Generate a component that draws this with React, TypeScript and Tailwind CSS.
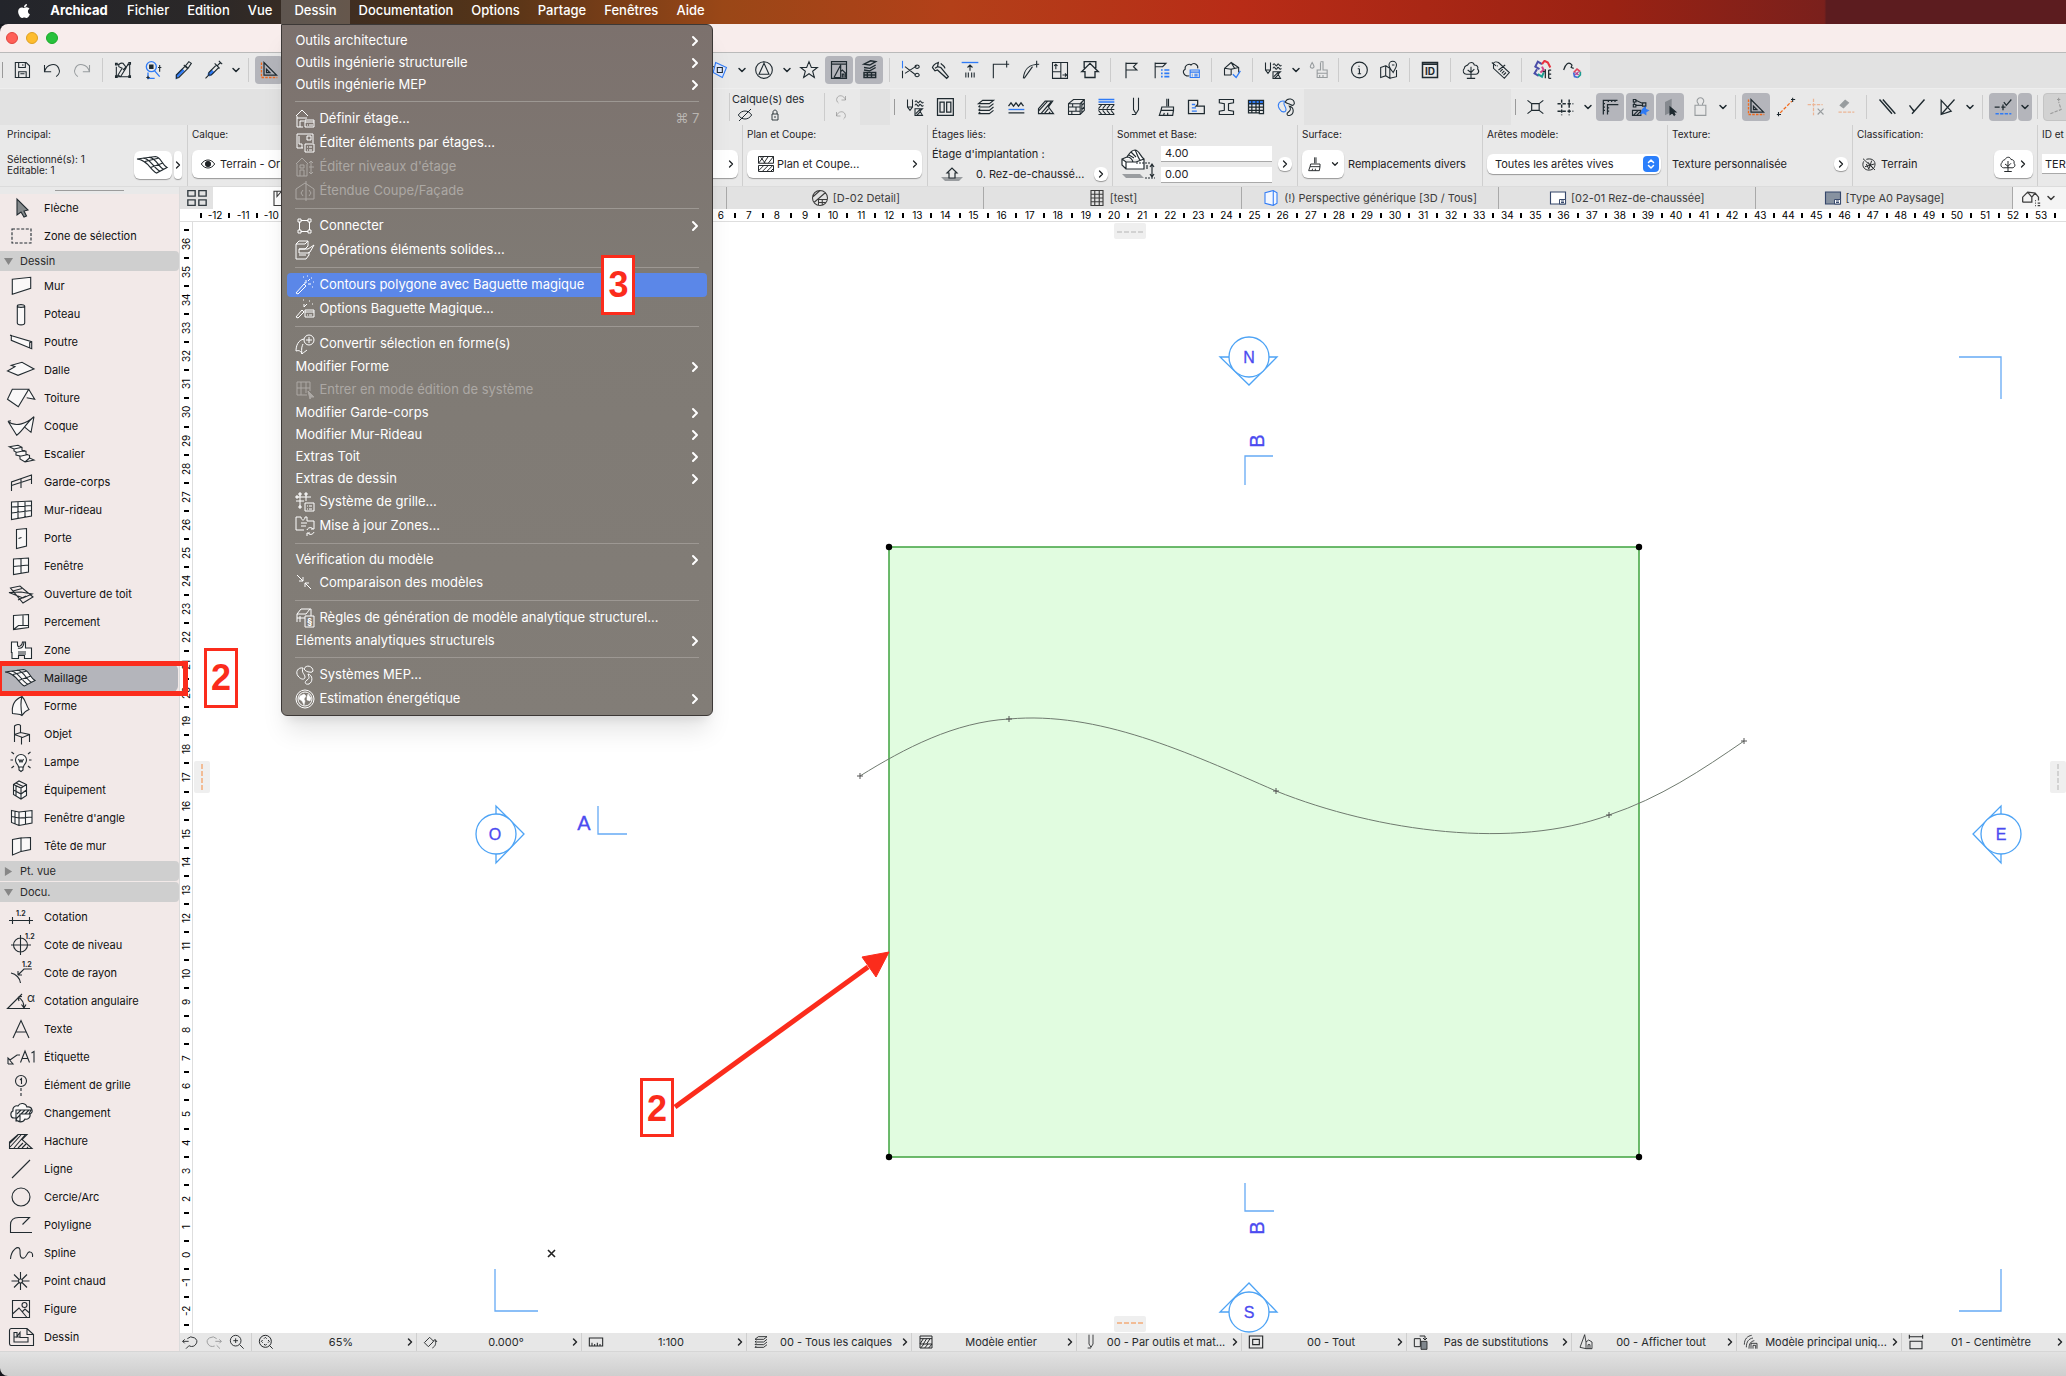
import type { ReactNode } from 'react';
import { ChevronDown, ChevronRight, ChevronsUpDown } from 'lucide-react';
import { FaApple } from 'react-icons/fa';

const BLUE = '#2f7bf6';
const ORANGE = '#f5893c';

// Icônes de la boîte à outils, dessinées sur une grille 28 x 24
const toolIcons: Record<string, ReactNode> = {
  Flèche: <path d="M10 3v16l4-3 3 5 2.500-1-2.500-5 4-1z" fill="#84898b" />,
  'Zone de sélection': <path d="M5 5h19v14H5z" fill="none" strokeDasharray="3 1.600" />,
  Mur: <path d="M5.300 5.300 23.700 3.300v11L5.300 20.300z" />,
  Poteau: <path d="M10.300 4v17c0 2.500 7.400 2.500 7.400 0V4c0-1.800-7.400-1.800-7.400 0s7.400 1.800 7.400 0" />,
  Poutre: <path d="M3 5.300l21.700 6.400v7L4.300 10.300V5.600M3 5.300l2 .2M24.700 11.700l-2 1v5" />,
  Dalle: <path d="M.5 13 8 8.700 4.300 7.300 15 4.300 27 11 11 17.300z" />,
  Toiture: <path d="M5.300 3.300h16.400L11.300 20.700.5 13.300zM21.700 3.300l6 10-8-1.500" />,
  Coque: <path d="M1 7.300C9 14 20 9 27 2.700c-7 5-10 13-17.300 18.600zM27 2.700 24 18.300l-6-5M1 7.300l3-.500" />,
  Escalier: <path d="M2.300 4.700 11 3.300l4 2v3l4 1v3l3.500 1V16l4.500 2-9 2-5-3v-3l-4-1V10L7 9V7z M7 7l8-1.700M9 10.500l9-2M12 14.500l9-2M18 20l4.500-4" />,
  'Garde-corps': <path d="M4.500 21v-9L24.500 5v9M4.500 15.500 24.500 9M14 9v9" fill="none" />,
  'Mur-rideau': <path d="M4.500 4 24.500 3v15L4.500 21.500zM11 4v16.500M18 3.500v15.500M4.500 9l20-1.500M4.500 15l20-2.500" />,
  Porte: <path d="M9.500 3.500 19.500 2.500V20l-10 2.500zM11.500 12.500l3-1" />,
  Fenêtre: <path d="M6.500 5 21.500 4v14l-15 2.500zM14 4.500v14.800M6.500 12.500l15-1.500" />,
  'Ouverture de toit': <path d="M3.500 6 13 4l13 11-10 6zM2 10.500l12-.500 11 2-9 4zM6 9l9-2.500M11 18l8-4" fill="none" />,
  Percement: <path d="M6.500 5.500 21.500 4.500v13l-15 2zM6.500 19.500l5-4h10M16 5v10.500" />,
  Zone: <path d="M4.500 4h6v3c0 3 5 1 5-3h3v6h6v10.500h-7v-3h-6v3H5v-6h-.600zM11 10c3 1 6-1 6-6M11 14h8M11 16h8" />,
  Maillage: <path d="M-2 6 16.500 3.500C22 4 23 12 28 14.500L17.500 20C12 18 9 7-2 6zM4.500 5.200C12 6 14 15 21 18.200M10.500 4.300C17 5 19 13.500 24.500 16.500M6 8.500 20 5M11.500 14.500 24 10" />,
  Forme: <path d="M15 2.500c4 4 4 9 7 13-3 1-5 3-7 6-2-2-6-1-9.500-2-1-8 2-14 9.500-17zM15 2.500c-2 6-1 13 0 19" />,
  Objet: <path d="M7.500 20V4c2-2 5-2 6-.5v7.500M7.500 12.500l6-2 9 2v7.500M7.500 12.500l8 3 7-3M14.500 15.500v7" fill="none" />,
  Lampe: <path d="M11.500 17c0-3-3-3-3-7a5.500 5.500 0 0 1 11 0c0 4-3 4-3 7zM12 17v3l2 1.500 2-1.500v-3M11.500 9l1.500 3 1-2 1 2 1.500-3M7 4 4.500 2M21 4l2.500-2M6 10H3.500M22 10h2.500M7 16l-2.500 2M21 16l2.500 2" />,
  Équipement: <path d="M6.500 6.500 12 3l7.500 3.500v11L14 21l-7.500-4.500zM6.500 6.500 14 10l5.500-3.500M14 10v11M9 5l7 3.500M6.500 12l7.500 4 5.500-4M9 8v5M9 14v5" />,
  "Fenêtre d'angle": <path d="M4.500 4.500 12 6l13-1.500V17l-13 2.500-7.500-3zM12 6v13.500M8 5v12.500M18.500 5v13M4.500 10.500 12 12l13-1" />,
  'Tête de mur': <path d="M5.500 5.500 14 4v13.500l-8.500 3.500zM14 4l9.500-.500v12L14 17.500" />,
  Cotation: (
    <>
      <path d="M2 15.500h24M5.500 12v7M22.500 12v7" fill="none" />
      <text x="9" y="11" className="text-[7px] font-bold" stroke="none" fill="#222b30">1.2</text>
    </>
  ),
  'Cote de niveau': (
    <>
      <path d="M4 12h20M13.500 2v20M6.500 12a7 7 0 1 0 14 0 7 7 0 1 0-14 0" fill="none" />
      <text x="18" y="6" className="text-[7px] font-bold" stroke="none" fill="#222b30">1.2</text>
    </>
  ),
  'Cote de rayon': (
    <>
      <path d="M4 12c5 1 9 5 9.500 10M25 8h-8l-6 6M11 14v-4M11 14h4" fill="none" />
      <text x="15" y="6" className="text-[7px] font-bold" stroke="none" fill="#222b30">1.2</text>
    </>
  ),
  'Cotation angulaire': (
    <>
      <path d="M23 19.500H.5L15 5M11 8c4 2 6 6 6 11M11 8l1 4M11 8l4-.500M17 19l-2.500-3.500M17 19l2-3.500" fill="none" />
      <text x="20" y="13" className="text-[12px]" stroke="none" fill="#222b30">α</text>
    </>
  ),
  Texte: <path d="M6 21 14 3.500 22 21M9 15h10" fill="none" />,
  Étiquette: <path d="M1 19v-6l2 2 7-5h3M1 19h5l-3-3.500M13.500 17.500 18 6l4.500 11.500M15 13.500h6M24.500 8 27 6.500v11" fill="none" />,
  'Élément de grille': <path d="M8.500 8a5.500 5.500 0 1 0 11 0 5.500 5.500 0 1 0-11 0M13 7l1.500-1.500V11M14 15v3M14 20v3" fill="none" />,
  Changement: <path d="M7 17c-4 0-4-6-1-7-1-4 3-6 5-5 2-4 8-3 9 1 5-1 7 5 3 7 1 4-3 6-5 5-2 4-8 4-9-1zM9 9h15l-2 4h-9v7H9zM10 13l4-4M14 13l4-4M18 13l4-4M9 18l4-4" />,
  Hachure: <path d="M2.500 19.500V13L11 5.500h9l-5 5 10 9zM3 18 14 6M7 19 18 6M11 19l5-5M15 19l4-4M3 14l8-8M20 19l1-1" fill="none" />,
  Ligne: <path d="M5 21 23 3" fill="none" />,
  'Cercle/Arc': <path d="M5 12a9 9 0 1 0 18 0 9 9 0 1 0-18 0" fill="none" />,
  Polyligne: <path d="M25 19.500H3.500V12c0-5 3-7.500 8-7.500h11l-7 7" fill="none" />,
  Spline: <path d="M3.500 18C4 9 12 3 13 9c0 5 0 9 4 8 3-1 3-7 6-6 2 0 3 2 2.500 5" fill="none" />,
  'Point chaud': <path d="M13.500 3v7M13.500 14v7M4.500 12h7M15.500 12h7M7 5.500l5 5M15 13.500l5 5M20 5.500l-5 5M7 18.500l5-5M11.500 12a2 2 0 1 0 4 0 2 2 0 1 0-4 0" fill="none" />,
  Figure: <path d="M5.500 3.500h17v17h-17zM5.500 17l6.500-6 8 9.500M15 15l3-3 4.500 4M15 8a2.500 2.500 0 1 0 5 0 2.500 2.500 0 1 0-5 0" fill="none" />,
  Dessin: <path d="M4 3.500h16l6.500 6V20.500H4a2 2 0 0 1-1.500-2V5.500a2 2 0 0 1 1.500-2zM20 3.500v6h6.500M7 17V7.500h3v4l3-4v5h8V17zM7 12h6" fill="none" />,
};

// Icônes 24 x 24 des barres d'outils
const icons: Record<string, ReactNode> = {
  save: <path d="M4 3h13l4 4v14H4zM8 3v6h8V3M8 21v-7h9v7M10 16.500h5M13 5v2" />,
  undo: <path d="M3 6v8h8M3 14C6 4 17 3 20 10c2 4 0 8-3 10" />,
  redo: <path d="M21 6v8h-8M21 14C18 4 7 3 4 10c-2 4 0 8 3 10" />,
  editSel: <path d="M4 5h3M17 5h3v15H4V8M12 12l8-8M7 8c-1-3 2-5 5-4l4 5-7 11-3-2 5-8zM3 4h2v2H3zM19 3h2v2h-2zM3 19h2v2H3zM19 19h2v2h-2z" />,
  findSel: (
    <>
      <path d="M4 8a6 6 0 1 0 12 0A6 6 0 1 0 4 8M14 13l6 7M6 15v7h8" stroke={BLUE} strokeWidth="1.600" />
      <path d="M8 6h4v4H8z" fill="currentColor" />
      <path d="M18 9h4M20 6v8M6 19v4M4 21h4" />
    </>
  ),
  pick: (
    <>
      <path d="M11 11 4 18v4l9-9z" fill={BLUE} stroke={BLUE} />
      <path d="M4 18 15 7l3 3L7 21l-3 1zM13 6l5 5M15 7l4-5 3 2-4 6" />
    </>
  ),
  inject: (
    <>
      <path d="M10 12 6 17l2 2 5-4z" fill={BLUE} stroke={BLUE} />
      <path d="M3 22l4-4v-3l9-9 3 3-9 9H7M14 4l6 6M17 7l4-4M19 1l4 4" />
    </>
  ),
  ruler: (
    <>
      <path d="M3 3v18h19" stroke="#f26a1b" strokeWidth="1.600" strokeDasharray="3 1.500" />
      <path d="M6 3v15h15zM9 11v4h4z" strokeWidth="1.500" />
    </>
  ),
  plane: (
    <>
      <path d="M1 15V8h16v7z" />
      <path d="M8 3 21 9l-5 12L5 15z" stroke={BLUE} fill="#dfe9ff" />
      <path d="M10 9h6v6h-6z" />
    </>
  ),
  trace: <path d="M2 12a10 10 0 1 0 20 0A10 10 0 1 0 2 12M12 4l6 13H6z" />,
  star: <path d="M12 2l2.800 7H22l-5.600 4.500 2 7.500-6.400-4.500L5.600 21l2-7.500L2 9h7.200z" />,
  house: <path d="M3 2h18v20H3zM3 5h18M6 21 14 6v15M14 14l2-2 4 4v5M16 21v-4h2v4M6 21h8" strokeWidth="1.400" />,
  layersDark: <path d="M6 5l8-4 6 1-7 4zM6 9l7 1 7-4M6 12l7 1 7-4M6 15h14v6H6zM6 18h14M10 15v6M15 15v6" strokeWidth="1.700" />,
  scissors: (
    <>
      <path d="M3 1v9" stroke={BLUE} />
      <path d="M3 13v9M6 8l13 10M6 16 20 7M18 18a2.500 2 0 1 0 5 0 2.500 2 0 1 0-5 0M18 8a2.500 2 0 1 0 5 0 2.500 2 0 1 0-5 0" />
    </>
  ),
  axe: <path d="M3 9c1-4 4-5 7-6l-1 5 4 1 9 11-2 2L9 12l-3 1zM9 8l-3 2M13 4c2 3 4 2 5 6" strokeWidth="1.500" />,
  adjust: (
    <>
      <path d="M2 3h20" stroke={BLUE} strokeWidth="1.600" />
      <path d="M12 6v7M9 9l3-3 3 3M7 15v6M10 15v6M14 15v6M17 15v6" />
    </>
  ),
  corner: <path d="M20 1v8M4 22V5h19" />,
  arcCorner: <path d="M20 1v8M4 22C5 11 10 5 23 5M5 22 15 8" />,
  resize: <path d="M3 3h18v19H3zM3 14h10v8M13 3v11M7 11V5M5 7l2-2 2 2M15 18h5M18 16l2 2-2 2" />,
  home2: <path d="M5 10V2h14v8M2 14 12 4l10 10h-4v7H6v-7z" strokeWidth="1.600" />,
  flag: <path d="M6 22V3M6 4h13l-4 4 4 4H6" strokeWidth="1.400" />,
  flagList: (
    <>
      <path d="M5 22V3M5 4h13l-4 4h-9" />
      <path d="M12 12h2M16 12h6M12 16h2M16 16h6M12 20h2M16 20h6" stroke={BLUE} strokeWidth="2" />
    </>
  ),
  cloudList: (
    <>
      <path d="M10 19c-7 1-9-6-5-8-1-5 5-7 7-5 4-4 9 0 8 4" />
      <path d="M11 12h11v9H11zM11 14.500h11M13 17h1M16 17h4M13 19h1M16 19h4" stroke={BLUE} />
    </>
  ),
  cube: (
    <>
      <path d="M3 10 11 3l9 6v6M3 10v8h8M11 18v-7l9-2M3 10l8 1M11 3l4 7" />
      <path d="M13 17l4 4 5-8" stroke={BLUE} strokeWidth="1.600" />
    </>
  ),
  penSet: <path d="M3 3v9l3 4 3-4V3M3 12h6M12 6c2-5 3 4 5 0s3 4 5 0M12 10c2-5 3 4 5 0s3 4 5 0M12 14h9l-3 3 3 5h-9zM13 20l6-6M14 22l5-5" />,
  brushDrop: <path d="M5 3c-3 5-3 6 0 7 3-1 3-2 0-7zM15 3v9h-4v9h12v-9h-5V2h-3M11 16h12M14 21v-3M18 21v-3" />,
  info: <path d="M3 12a9.500 9.500 0 1 0 19 0 9.500 9.500 0 1 0-19 0M12.500 10.500v6M10.500 16.500h4M10.500 10.500h2M12 7v1" strokeWidth="1.400" />,
  map: <path d="M2 9l6-2v12l-6 2zM8 7l5 3v12l-5-3M13 22l8-2v-8M17 15c-3-4-5-6-5-9a4.500 4.500 0 0 1 9 0c0 3-2 5-4 9zM15.500 6h3" />,
  idBox: (
    <>
      <path d="M3 3h18v18H3zM3 5h18" strokeWidth="1.800" />
      <text x="6" y="17.500" className="text-[12px] font-bold" stroke="none" fill="currentColor">ID</text>
    </>
  ),
  tree: <path d="M12 22V8M8 12l4 3 4-4M7 22h10M8 17c-5 1-7-4-4-7 0-3 3-3 4-4 2-4 7-4 8 0 3 0 5 2 4 5 3 3 0 7-4 6z" />,
  tag: <path d="M3 10V4c1-2 4-2 6-1l13 12-6 7zM7 7h1M9 12l8-6M11 14l3-3M13 16l3-3M15 18l3-3M1 3l5 4" />,
  mepRed: (
    <>
      <path d="M9 11 4 8l3-6 5 3M6 11l-3 5 5 3" stroke="#4a4da8" strokeWidth="2.400" />
      <path d="M12 5l3-4 4 2 3 6" stroke="#e8313f" strokeWidth="2.400" />
      <path d="M7 17l5 3 2-5" stroke="#1b9d92" strokeWidth="2.400" />
      <path d="M12 8l2 4-4 3" stroke="#d9438b" strokeWidth="2.400" />
      <path d="M16 11v11M20 12v10M20 12h3M20 17h3M20 22h3M13 14h3" strokeWidth="1.500" />
    </>
  ),
  mepCurve: (
    <>
      <path d="M2 12C4 5 8 1 12 6l-1 3 3 1" strokeWidth="1.400" />
      <path d="M14 15l4-4 4 3" stroke="#e0425a" strokeWidth="2" />
      <path d="M14 15l1 5 4 1" stroke="#3f6ad8" strokeWidth="2" />
      <path d="M22 14v4l-3 3" stroke="#1b9d92" strokeWidth="2" />
      <path d="M16 15l4 3M20 14l-4 4" stroke="#b23f93" strokeWidth="1.500" />
    </>
  ),
  columns: <path d="M3 2h19v20H3zM6 6h5v12H6zM14 6h5v12h-5z" strokeWidth="1.500" />,
  layers: <path d="M8 4h13l-5 4H3zM3 12h13l5-4M3 16h13l5-4M3 20h13l5-4M3 12l2-2M3 16l2-2M3 20l2-2" strokeWidth="1.400" />,
  waves: (
    <>
      <path d="M3 11l3-4 3 4 3-4 3 4 3-4 3 4M3 19h19" strokeWidth="1.500" />
      <path d="M3 15h19" stroke={BLUE} strokeWidth="1.600" />
    </>
  ),
  hatch: <path d="M3 20v-6L11 5h9l-5 7 6 8zM3 17 14 5M6 20 18 6M10 20l5-6M15 20l2-2" strokeWidth="1.400" />,
  bricks: <path d="M3 8l6-5h13v13l-5 5H3zM3 8h14l5-5M17 8v13M3 12h14M3 17h14M8 8v4M12 12v5M7 17v4M19 6v13M19 10l3-3M19 15l3-3" />,
  composite: (
    <>
      <path d="M3 3h19M3 6h19" stroke={BLUE} strokeWidth="2" />
      <path d="M3 9h19M3 15h19M3 21h19M3 14l4-5M8 14l4-5M13 14l4-5M18 14l4-5M3 16l4 5M8 16l4 5M13 16l4 5M18 16l4 5" />
    </>
  ),
  pen: <path d="M9 1v14l3 5 3-5V1M7 21h5" />,
  brush: <path d="M13 2v9M15 2v9M7 12h14v4H6zM6 16l-2 6h16l1-6M9 22l1-3M14 22v-3" strokeWidth="1.400" />,
  building: (
    <>
      <path d="M3 4h11v5l-2 2h10v9H3z" strokeWidth="1.500" />
      <path d="M7 9h4M7 13h5M7 17h6" stroke={BLUE} strokeWidth="1.600" />
    </>
  ),
  profile: <path d="M4 3h17v4l-6 1v8l6 1v4H4v-4l6-1V8L4 7z" strokeWidth="1.400" />,
  table: (
    <>
      <path d="M3 4h18v5H3z" fill={BLUE} stroke="none" />
      <path d="M3 4h18v16h-5v-1H3zM3 8h18M3 12h18M3 16h18M7 4v15M12 4v15M16 4v15" strokeWidth="1.500" />
    </>
  ),
  fan: (
    <>
      <path d="M10 5C4 4 1 9 4 14s8 5 8 1-4-5-2-10z" stroke={BLUE} />
      <path d="M11 6c3-6 11-4 11 2-1 3-3 2-5 1s-4-1-6-3zM16 11c6 1 6 9 1 11-4 1-5-2-2-4s3-4 1-7z" />
    </>
  ),
  eyeOff: <path d="M2 12c5-8 15-8 20 0-5 8-15 8-20 0zM3 21 21 3" strokeWidth="1.500" />,
  lock: <path d="M6 10h12v12H6zM8 10V6c0-5 8-5 8 0v4M12 14v4" strokeWidth="1.800" />,
  snapNode: <path d="M8 8h9v8H8zM3 4l5 4M22 4l-5 4M3 20l5-4M22 20l-5-4" strokeWidth="1.400" />,
  grid: <path d="M8 3v19M17 3v19M3 8h19M3 17h19" strokeDasharray="4 2" strokeWidth="1.700" />,
  rulers: <path d="M4 21V4h17M9 21V9h13M4 8h2M4 12h2M4 16h2M9 13h2M9 17h2M10 4v2M14 4v2M18 4v2" strokeWidth="1.500" />,
  wires: (
    <>
      <path d="M4 3h3v3H4zM15 7h4v4h-4zM4 9h3v3H4zM7 4l9 4M7 10l8 0M5 6v3M18 11v4M3 16h10v6H3zM4 22l6-6M8 22l5-5" strokeWidth="1.400" />
      <path d="M15 15l3-3 1 3 3 1-3 2v3l-3-2-3 1z" fill={BLUE} stroke={BLUE} />
    </>
  ),
  cursorBox: (
    <>
      <path d="M6 6l8-4v16l-8 4z" fill="#85898f" stroke="none" />
      <path d="M12 12v9l3-2 2 3 1-1-2-3h3z" fill="currentColor" />
    </>
  ),
  weight: <path d="M6 10h13v12H6zM10 10V8a4 4 0 1 1 5 0v2" />,
  guide: (
    <>
      <path d="M5 19 19 5" stroke="#f26a1b" strokeDasharray="4 2" strokeWidth="1.500" />
      <path d="M20 1v5M18 3h5M3 18v5M1 21h5" />
    </>
  ),
  guideDel: (
    <>
      <path d="M9 2v20M2 9h18" stroke="#f26a1b" strokeWidth="1.500" strokeDasharray="4 1.500" />
      <path d="M14 14l7 7M21 14l-7 7" />
    </>
  ),
  eraser: (
    <>
      <path d="M5 10l6-6 4 3-6 6z" fill="currentColor" />
      <path d="M3 18h19" stroke="#f26a1b" strokeWidth="1.500" strokeDasharray="4 1.500" />
    </>
  ),
  parallel: <path d="M3 3l15 17M7 3l15 17" strokeWidth="1.700" />,
  perp: <path d="M3 10l6 8M21 3 6 20M6 14l3 3" strokeWidth="1.700" />,
  bisect: <path d="M5 21V4l12 13zM5 21 21 3" strokeWidth="1.500" />,
  snapLine: (
    <>
      <path d="M2 12h6M10 12h5M12 9v7M13 6l3 4 6-7" strokeWidth="1.500" />
      <path d="M3 20h19" stroke={BLUE} strokeDasharray="4 1.500" strokeWidth="1.800" />
    </>
  ),
  polyFade: <path d="M4 20l13-5-3-9M12 3h5M14 1v5" strokeDasharray="4 1.500" />,
  eye: (
    <>
      <path d="M2 12c5-8 15-8 20 0-5 8-15 8-20 0z" strokeWidth="1.500" />
      <circle cx="12" cy="12" r="4" fill="currentColor" />
    </>
  ),
  planCut: <path d="M2 2h20v9H2zM2 11 9 2M9 11l6-9M15 11l7-9M5 3l6 8M2 14h20v8H2zM2 21l7-7M7 22l8-8M13 22l8-8M18 22l4-4" strokeWidth="1.300" />,
  sheet: (
    <>
      <path d="M2 4h20v16H2z" fill="white" stroke="#34466a" strokeWidth="1.500" />
      <path d="M14 14h8v6h-8zM16 16h4M16 18h4" fill="white" stroke="#34466a" />
    </>
  ),
  sheetDark: (
    <>
      <path d="M2 4h20v16H2z" fill="#8792a0" stroke="#34466a" strokeWidth="1.500" />
      <path d="M14 14h8v6h-8zM16 16h4M16 18h4" fill="white" stroke="#34466a" />
    </>
  ),
  detail: <path d="M2 12a10 10 0 1 0 20 0A10 10 0 1 0 2 12M3 10 12 2M4 18 19 5M10 22v-8h12M10 18h9M15 14v7" strokeWidth="1.400" />,
  schedule: <path d="M4 2h16v20H4zM4 7h16M4 12h16M4 17h16M9 2v20M15 2v20" strokeWidth="1.500" />,
  persp: <path d="M4 5l11-3 5 3v14l-5 3-11-3zM15 2v20" stroke={BLUE} fill="#f3f7ff" strokeWidth="1.400" />,
  views: <path d="M2 17V11L8 5l9 1 4 5v4M2 17h11v-6L8 5M13 11l4-5M17 15h1M17 18h1M20 18h3M17 21h1M20 21h3" strokeWidth="1.500" />,
  quad: <path d="M2 4h8v6H2zM14 4h8v6h-8zM2 14h8v6H2zM14 14h8v6h-8z" strokeWidth="1.500" />,
  doc: <path d="M4 22V3h13l4 4v15zM8 3v7l6-7" strokeWidth="1.500" />,
  leafStop: <path d="M3 4l18 17M4 8c-3 6 0 12 6 13 7 1 11-3 11-9S15 3 8 5M8 12l4 8M10 9l8 9M16 7l-4 12M6 16l14-4" strokeWidth="1.400" />,
  // barre d'état
  zoomBack: <path d="M8 7a8 7 0 1 1 3 11M1 11h9M4 8l-3 3 3 3M11 17l-5 5" strokeWidth="1.400" />,
  zoomFwd: <path d="M16 7a8 7 0 1 0-3 11M23 11h-9M20 8l3 3-3 3M16 17l5 5" strokeWidth="1.400" />,
  zoomIn: <path d="M2 10a8 8 0 1 0 16 0 8 8 0 1 0-16 0M16 16l6 6M10 6.500v7M6.500 10h7" strokeWidth="1.400" />,
  zoomFit: <path d="M2 11a9 9 0 1 0 18 0 9 9 0 1 0-18 0M17 17l5 5M9 7l2-2 2 2M9 15l2 2 2-2M7 9l-2 2 2 2M15 9l2 2-2 2" strokeWidth="1.500" />,
  orient: <path d="M2 13 10 5l6 6-8 8zM14 21c5-3 6-7 4-12M15 11l3-3 3 4" strokeWidth="1.400" />,
  scale: <path d="M2 6h20v12H2zM6 18v-5M10 18v-3M14 18v-5M18 18v-3" strokeWidth="1.600" />,
  model: <path d="M3 3h18v18H3zM3 7h18M3 15h18M3 15l5-8M8 15l5-8M13 15l5-8M4 21l5-6M10 21l5-6M16 21l5-6" strokeWidth="1.500" />,
  frame: <path d="M2 3h20v18H2zM7 8h10v8H7z" strokeWidth="1.700" />,
  swap: (
    <>
      <path d="M2 7h9v12H2zM10 3h8v5M15 6l3 3 3-3" strokeWidth="1.500" />
      <path d="M12 11h9v12h-9z" fill="#7f868c" />
    </>
  ),
  reno: <path d="M10 1 3 20l9 2h9V12l-5-3-4 3M10 1l2 11v10M15 22v-6h3v6" strokeWidth="1.300" />,
  arches: <path d="M2 16C2 7 7 3 13 2M5 20c0-9 4-13 10-14M9 22c0-8 3-11 8-12M12 22v-8h9v8M15 22v-5h4v5" strokeWidth="1.300" />,
  dims: <path d="M2 4h20M2 1v6M22 1v6M3 11h18v11H3z" strokeWidth="1.600" />,
};

// Icônes du menu déroulant, 20 x 20
const menuIcons: Record<string, ReactNode> = {
  story: <path d="M1 7 7 1l6 6M2 7v11h6M2 9h10M5 18v-6h4M10 11h9v7h-9zM10 13h9M12 16h1M14 16h4" />,
  storyEdit: <path d="M2 1h16v9M2 1v14h6M4 3v8h3v4M12 3h4v4h-4zM10 11h9v8h-9zM12 14h1M14 14h3M12 17h1M14 17h3" />,
  storyLevel: <path d="M1 7 7 1l6 6M2 7v12h10V7M5 8h4v3H5zM5 19v-6h4v6M16 4v13M14 6l2-2 2 2M14 15l2 2 2-2M14 10h5" />,
  section: <path d="M1 18V8l9-6 9 6v10zM11 0v20M8 9l-2 3 2 3M14 9l2 3-2 3" />,
  connect: <path d="M3 3h3v3H3zM13 3h3v3h-3zM3 14h3v3H3zM13 14h3v3h-3zM6 4.500h7M6 15.500h7M4.500 6v8M14.500 6v8" />,
  solid: <path d="M1 4l3-3h9v5l-3 3H4M1 4h9l3-3M1 4v15h10l3-4v-3M4 9h9l6-4-4 7-2 1H4zM4 15h7" />,
  wand: <path d="M1 18 9 9l2 2-8 8zM11 5v3M13 9h3M9 8l2 0M8 2h1M12 1h1M16 3h1M18 7h1M17 12h1M13 6l2-2" />,
  wandOpt: <path d="M1 18 7 11l2 2-6 6zM9 5v3l3-3M8 1h1M14 2h1M17 5h1M10 11h9v7h-9zM10 13h9M12 16h1M14 16h3" />,
  convert: <path d="M9 5c-6 1-8 7-8 12 3-1 5 0 6 3 2-2 4-3 5-4M7 20c-1-5 0-8 1-10M9 6a5 5 0 1 0 10 0A5 5 0 1 0 9 6M14 3v6M11 6h6" />,
  gridEdit: (
    <>
      <path d="M2 2h13v9M2 2v13h10M6 2v13M11 2v11M2 8h13" />
      <path d="M13 11l6 6h-3l-1 2z" fill="currentColor" />
    </>
  ),
  gridSys: <path d="M5 1v15M11 1v8M1 5h15M1 9h8M1 4h2v2H1zM4 1h2v2H4zM10 1h2v2h-2zM4 14h2v2H4zM10 11h9v8h-9zM12 14h1M14 14h3M12 17h1M14 17h3" />,
  zoneUpd: <path d="M9 14H1V1h5c0 4 4 4 4 0h2v4h7v5M6 7h6M6 10h5M12 14c1-3 5-3 6-1M19 10v3h-3M19 16c-1 3-5 3-6 1M12 20v-3h3" />,
  compare: <path d="M2 2l6 6M8 4v4H4M16 16l-6-6M10 14v-4h4" />,
  rules: (
    <>
      <path d="M2 6l4-5h10v7M2 6h9l4-5M2 6v8M5 8v6M2 10h8M10 8h9v11h-9z" />
      <text x="12" y="17" className="text-[9px] font-bold" stroke="none" fill="currentColor">§</text>
    </>
  ),
  mep: <path d="M8 3C3 2 0 7 3 11s7 4 7 1-4-4-2-9zM9 4c2-5 9-3 9 2-1 2-3 1-4 1s-4-1-5-3zM13 9c5 1 5 8 1 10-4 1-5-2-2-4s2-3 1-6z" />,
  globe: (
    <>
      <path d="M1 10a9 9 0 1 0 18 0 9 9 0 1 0-18 0M3 10a7 7 0 1 0 14 0 7 7 0 1 0-14 0" />
      <path d="M5 7l4-2 2 2-2 3 1 2-1 4-2-4-3-2zM13 5l3 4-1 3-3-1 0-3z" fill="currentColor" strokeWidth="0.500" />
    </>
  ),
};

function Icon({ name, className = 'size-6' }: { name: string; className?: string }) {
  return (
    <svg viewBox="0 0 24 24" className={`shrink-0 ${className}`} fill="none" stroke="currentColor" strokeWidth="1.300" aria-hidden>
      {icons[name]}
    </svg>
  );
}

const sep = { kind: 'sep' } as const;
const chev = { kind: 'chev' } as const;
const btn = (icon: string, state?: 'on' | 'off') => ({ kind: 'btn', icon, state }) as const;
type BarItem = typeof sep | typeof chev | ReturnType<typeof btn>;

function Bar({ items }: { items: BarItem[] }) {
  return (
    <>
      {items.map((item, i) => {
        if (item.kind === 'sep') return <span key={i} className="mx-[5px] h-6 w-px shrink-0 bg-[#cccccc]" />;
        if (item.kind === 'chev')
          return (
            <button key={i} aria-label="Plus" className="flex w-[15px] shrink-0 justify-center">
              <ChevronDown className="size-3" strokeWidth={3} />
            </button>
          );
        return (
          <button
            key={i}
            aria-label={item.icon}
            className={`mx-px flex size-7 shrink-0 items-center justify-center rounded ${
              item.state === 'on' ? 'bg-[#b4b5bb]' : item.state === 'off' ? 'opacity-40' : ''
            }`}
          >
            <Icon name={item.icon} className="size-5" />
          </button>
        );
      })}
    </>
  );
}

const Grip = () => <span className="h-4 w-px shrink-0 bg-[#9a9a9a]" />;

const barLeft = [btn('save'), btn('undo'), btn('redo', 'off'), sep, btn('editSel'), btn('findSel'), btn('pick'), btn('inject'), chev, sep, btn('ruler', 'on')];
const barRight = [
  btn('plane'), chev, btn('trace'), chev, btn('star'), btn('house', 'on'), btn('layersDark', 'on'), sep,
  btn('scissors'), btn('axe'), btn('adjust'), btn('corner'), btn('arcCorner'), btn('resize'), btn('home2'), sep,
  btn('flag'), btn('flagList'), btn('cloudList'), sep, btn('cube'), sep, btn('penSet'), chev, btn('brushDrop', 'off'), sep,
  btn('info'), btn('map'), sep, btn('idBox'), sep, btn('tree'), btn('tag'), sep, btn('mepRed'), btn('mepCurve'),
];
const barAttrs = [
  btn('penSet'), btn('columns'), sep, btn('layers'), btn('waves'), btn('hatch'), btn('bricks'), btn('composite'),
  btn('pen'), btn('brush'), btn('building'), btn('profile'), btn('table'), btn('fan'),
];
const barSnap = [
  btn('snapNode'), btn('grid'), chev, btn('rulers', 'on'), btn('wires', 'on'), btn('cursorBox', 'on'), btn('weight', 'off'), chev, sep,
  btn('ruler', 'on'), btn('guide'), btn('guideDel', 'off'), btn('eraser', 'off'), sep, btn('parallel'), btn('perp'), btn('bisect'), chev, sep,
];

type Entry = { label: string; icon?: string; sub?: boolean; disabled?: boolean; active?: boolean; keys?: string };

const dropdown: Entry[][] = [
  [
    { label: 'Outils architecture', sub: true },
    { label: 'Outils ingénierie structurelle', sub: true },
    { label: 'Outils ingénierie MEP', sub: true },
  ],
  [
    { label: 'Définir étage...', icon: 'story', keys: '⌘ 7' },
    { label: 'Éditer éléments par étages...', icon: 'storyEdit' },
    { label: "Éditer niveaux d'étage", icon: 'storyLevel', disabled: true },
    { label: 'Étendue Coupe/Façade', icon: 'section', disabled: true },
  ],
  [
    { label: 'Connecter', icon: 'connect', sub: true },
    { label: 'Opérations éléments solides...', icon: 'solid' },
  ],
  [
    { label: 'Contours polygone avec Baguette magique', icon: 'wand', active: true },
    { label: 'Options Baguette Magique...', icon: 'wandOpt' },
  ],
  [
    { label: 'Convertir sélection en forme(s)', icon: 'convert' },
    { label: 'Modifier Forme', sub: true },
    { label: 'Entrer en mode édition de système', icon: 'gridEdit', disabled: true },
    { label: 'Modifier Garde-corps', sub: true },
    { label: 'Modifier Mur-Rideau', sub: true },
    { label: 'Extras Toit', sub: true },
    { label: 'Extras de dessin', sub: true },
    { label: 'Système de grille...', icon: 'gridSys' },
    { label: 'Mise à jour Zones...', icon: 'zoneUpd' },
  ],
  [
    { label: 'Vérification du modèle', sub: true },
    { label: 'Comparaison des modèles', icon: 'compare' },
  ],
  [
    { label: 'Règles de génération de modèle analytique structurel...', icon: 'rules' },
    { label: 'Eléments analytiques structurels', sub: true },
  ],
  [
    { label: 'Systèmes MEP...', icon: 'mep' },
    { label: 'Estimation énergétique', icon: 'globe', sub: true },
  ],
];

function Callout({ n, className }: { n: number; className: string }) {
  return (
    <span
      className={`absolute z-30 flex h-[60px] w-[34px] items-center justify-center border-[3px] border-[#fb2c1c] bg-white font-['Liberation_Sans',sans-serif] text-4xl font-bold text-[#fb2c1c] ${className}`}
    >
      {n}
    </span>
  );
}

function DessinMenu() {
  return (
    <div className="absolute top-full left-0 z-20 w-[432px] rounded-b-md rounded-tr-md border border-[#3c3836] bg-linear-to-b from-[#7c716d] via-[#7f7a74] via-35% to-[#827d77] px-[5px] pt-[5px] pb-1 text-[13px] text-white shadow-xl">
      {dropdown.map((group, g) => (
        <div key={g}>
          {g > 0 && <hr className="mx-2 my-[5px] border-[#9d9893]" />}
          {group.map((e) => (
            <button
              key={e.label}
              disabled={e.disabled}
              className={`relative flex w-full items-center gap-1 rounded px-2 text-left ${e.icon ? 'h-6' : 'h-[22px]'} ${
                e.active ? 'bg-[#5b87e8]' : ''
              } ${e.disabled ? 'text-[#aca8a4]' : ''}`}
            >
              {e.icon && (
                <svg viewBox="0 0 20 20" className="size-5 shrink-0" fill="none" stroke="currentColor" aria-hidden>
                  {menuIcons[e.icon]}
                </svg>
              )}
              <span className="whitespace-nowrap">{e.label}</span>
              {e.sub && <ChevronRight className="ml-auto -mr-1 size-4" strokeWidth={3} />}
              {e.keys && <span className="ml-auto text-[#b9b5b1]">{e.keys}</span>}
              {e.active && <Callout n={3} className="-top-[18px] right-[72px]" />}
            </button>
          ))}
        </div>
      ))}
    </div>
  );
}

const menus = ['Fichier', 'Edition', 'Vue', 'Dessin', 'Documentation', 'Options', 'Partage', 'Fenêtres', 'Aide'];

function MenuBar() {
  return (
    <nav className="relative z-20 flex h-6 shrink-0 items-stretch bg-[linear-gradient(90deg,#23252b_0%,#2b2828_10%,#553418_24%,#9a4717_35%,#b34019_46%,#b82c17_60%,#9a2213_78%,#7a201c_88.300%,#5c1c1f_88.400%)] pb-[2px] text-[13px] text-white">
      <button aria-label="Apple" className="flex w-[40px] items-center justify-center pl-2">
        <FaApple className="size-4" />
      </button>
      <button className="flex w-[78px] items-center justify-center font-bold">Archicad</button>
      {menus.map((m) => (
        <div key={m} className={`relative -mb-[2px] flex pb-[2px] ${m === 'Dessin' ? 'bg-white/20' : ''}`}>
          <button className={`font-medium ${m === 'Dessin' ? 'px-[13px]' : 'px-[9px]'}`}>{m}</button>
          {m === 'Dessin' && <DessinMenu />}
        </div>
      ))}
    </nav>
  );
}

function Toolbars() {
  return (
    <div className="shrink-0 overflow-hidden bg-[#e2e2e2] text-[#1f2a30]">
      <div className="flex h-[35px] items-center">
        <div className="flex h-full items-center bg-[#e9e9e9] pr-[3px] pb-[2px] pl-[2px]">
          <Grip />
          <span className="w-1" />
          <Bar items={barLeft} />
          <span className="w-[420px] shrink-0" />
          <Bar items={barRight} />
        </div>
      </div>
      <div className="flex h-[37px] items-center border-t border-[#eeeeee]">
        <span className="w-[713px] shrink-0" />
        <div className="flex h-full w-[147px] shrink-0 items-center bg-[#e9e9e9] pb-px pl-4">
          <span className="h-7 w-px bg-[#cccccc]" />
          <div className="ml-[2px] flex w-[92px] flex-col">
            <span className="text-[11px] leading-4 whitespace-nowrap">Calque(s) des</span>
            <div className="flex items-center gap-4 pl-[5px]">
              <button aria-label="Masquer"><Icon name="eyeOff" className="size-4" /></button>
              <button aria-label="Verrouiller"><Icon name="lock" className="size-3" /></button>
            </div>
          </div>
          <span className="h-7 w-px bg-[#cccccc]" />
          <div className="flex flex-col gap-1 pl-[10px] text-[#8e8e8e]">
            <button aria-label="Rétablir"><Icon name="redo" className="size-3" /></button>
            <button aria-label="Annuler"><Icon name="undo" className="size-3" /></button>
          </div>
        </div>
        <span className="w-[30px] shrink-0" />
        <div className="flex h-full shrink-0 items-center bg-[#e9e9e9] pr-[3px] pb-px pl-1">
          <Grip />
          <span className="w-[5px]" />
          <Bar items={barAttrs} />
        </div>
        <span className="flex-1" />
        <div className="flex h-full w-[555px] shrink-0 items-center overflow-hidden bg-[#e9e9e9] pb-px pl-1">
          <Grip />
          <span className="w-1 shrink-0" />
          <Bar items={barSnap} />
          <Bar items={[btn('snapLine', 'on')]} />
          <button aria-label="Plus" className="flex h-7 w-[14px] shrink-0 items-center justify-center rounded bg-[#b4b5bb]">
            <ChevronDown className="size-3" strokeWidth={3} />
          </button>
          <Bar items={[sep]} />
          <button aria-label="Polyligne" className="flex size-7 shrink-0 items-center justify-center rounded border border-[#c4c4c4] bg-[#d2d2d2] text-[#9a9a9a]">
            <Icon name="polyFade" className="size-5" />
          </button>
        </div>
      </div>
    </div>
  );
}

function Panel({ title, children }: { title?: string; children?: ReactNode }) {
  return (
    <div className="flex w-[185px] shrink-0 flex-col border-l border-[#cfcfcf] pl-1">
      <span className="h-[18px] text-[10px] leading-[18px]">{title}</span>
      <div className="flex flex-1 items-center pb-px">{children}</div>
    </div>
  );
}

const popBtn = 'flex items-center justify-center rounded-md bg-white shadow-[0_1px_1px_rgba(0,0,0,0.35)]';

function InfoBox() {
  return (
    <div className="flex h-[62px] shrink-0 overflow-hidden border-b border-[#dcdcdc] bg-[#e9e9e9] text-[11px] text-[#1f2326]">
      <div className="flex w-[187px] shrink-0 flex-col pl-[7px]">
        <span className="h-[18px] text-[10px] leading-[18px]">Principal:</span>
        <div className="flex flex-1 items-center">
          <div className="flex-1 text-[10px] leading-[11px]">
            Sélectionné(s): 1<br />Editable: 1
          </div>
          <button aria-label="Maillage" className={`h-7 w-[38px] ${popBtn}`}>
            <svg viewBox="0 0 28 24" className="w-7 overflow-visible" fill="none" stroke="#222b30" strokeWidth="1.200">{toolIcons.Maillage}</svg>
          </button>
          <button aria-label="Suite" className={`mr-[5px] ml-[2px] h-7 w-2 ${popBtn}`}>
            <ChevronRight className="size-3 shrink-0" strokeWidth={2.5} />
          </button>
        </div>
      </div>
      <Panel title="Calque:">
        <button className={`h-7 w-[176px] gap-1 px-2 ${popBtn} justify-start`}>
          <Icon name="eye" className="size-4" />
          Terrain - Original
        </button>
      </Panel>
      <Panel />
      <Panel>
        <button aria-label="Suite" className={`h-7 w-[176px] px-px ${popBtn} justify-end`}>
          <ChevronRight className="size-3" strokeWidth={2.500} />
        </button>
      </Panel>
      <Panel title="Plan et Coupe:">
        <button className={`h-7 w-[175px] gap-[2px] pr-px pl-[10px] ${popBtn} justify-start`}>
          <Icon name="planCut" className="size-[18px]" />
          Plan et Coupe...
          <ChevronRight className="ml-auto size-3" strokeWidth={2.500} />
        </button>
      </Panel>
      <Panel title="Étages liés:">
        <div className="flex-1">
          <div className="leading-4">Étage d'implantation :</div>
          <div className="flex items-center pt-1 pl-2">
            <svg viewBox="0 0 24 16" className="h-4 w-6" fill="none" stroke="#222b30" strokeWidth="1.200">
              <path d="M1 11h22l-4 4H5z" fill="#9a9da0" stroke="none" />
              <path d="M7 7l5-5 5 5h-2v5H9V7z" fill="#e9e9e9" />
            </svg>
            <span className="flex-1 pl-3">0. Rez-de-chaussé...</span>
            <button aria-label="Suite" className={`mr-1 size-[14px] ${popBtn}`}>
              <ChevronRight className="size-3" strokeWidth={2.500} />
            </button>
          </div>
        </div>
      </Panel>
      <Panel title="Sommet et Base:">
        <svg viewBox="0 0 36 30" className="mr-1 ml-1 w-9" fill="none" stroke="#222b30" strokeWidth="1.200">
          <path d="M1 10l5-2c2-3 4-7 8-7 4 0 5 6 9 9v10H5l-4-4zM1 10l4 3h10l8-3M5 13v7M6 8c3 0 5 2 6 5M14 1c2 3 2 6 5 10M10 3l5 5M8 6l5 3" fill="white" />
          <path d="M1 25h18l4 4H5z" fill="#9a9da0" stroke="none" />
          <path d="M15 14h14M24 29h10" strokeDasharray="2 1" />
          <path d="M31 15v13M29 18l2-3 2 3M29 25l2 3 2-3M26 16v4" />
        </svg>
        <div className="flex flex-col gap-[5px]">
          <input aria-label="Sommet" defaultValue="4.00" className="h-4 w-[111px] border-b border-[#a9a9a9] bg-white px-1" />
          <input aria-label="Base" defaultValue="0.00" className="h-4 w-[111px] border-b border-[#a9a9a9] bg-white px-1" />
        </div>
        <button aria-label="Suite" className={`ml-[6px] size-[14px] ${popBtn}`}>
          <ChevronRight className="size-3" strokeWidth={2.500} />
        </button>
      </Panel>
      <Panel title="Surface:">
        <button aria-label="Surface" className={`mr-1 h-7 w-[42px] gap-2 ${popBtn}`}>
          <Icon name="brush" className="size-4" />
          <ChevronDown className="size-[10px]" strokeWidth={3} />
        </button>
        Remplacements divers
      </Panel>
      <Panel title="Arêtes modèle:">
        <div className="relative">
          <select aria-label="Arêtes modèle" className="h-5 w-[174px] appearance-none rounded-md bg-white pl-2 shadow-[0_1px_1px_rgba(0,0,0,0.35)]">
            <option>Toutes les arêtes vives</option>
          </select>
          <span className="pointer-events-none absolute top-[2px] right-[2px] flex size-4 items-center justify-center rounded bg-[#2b7ffb] text-white">
            <ChevronsUpDown className="size-3" strokeWidth={3} />
          </span>
        </div>
      </Panel>
      <Panel title="Texture:">
        <span className="flex-1">Texture personnalisée</span>
        <button aria-label="Suite" className={`mr-1 size-[14px] ${popBtn}`}>
          <ChevronRight className="size-3" strokeWidth={2.500} />
        </button>
      </Panel>
      <Panel title="Classification:">
        <Icon name="leafStop" className="mx-1 size-4" />
        <span className="flex-1">Terrain</span>
        <button aria-label="Classification" className={`mr-1 h-7 w-[39px] ${popBtn}`}>
          <Icon name="tree" className="size-[18px]" />
          <ChevronRight className="size-3" strokeWidth={2.500} />
        </button>
      </Panel>
      <Panel title="ID et">
        <input aria-label="ID" defaultValue="TER" className="h-5 w-[120px] border-b border-[#a9a9a9] bg-white px-[3px]" />
      </Panel>
    </div>
  );
}

const selectTools = ['Flèche', 'Zone de sélection'];
const designTools = [
  'Mur', 'Poteau', 'Poutre', 'Dalle', 'Toiture', 'Coque', 'Escalier', 'Garde-corps', 'Mur-rideau', 'Porte', 'Fenêtre',
  'Ouverture de toit', 'Percement', 'Zone', 'Maillage', 'Forme', 'Objet', 'Lampe', 'Équipement', "Fenêtre d'angle", 'Tête de mur',
];
const docTools = [
  'Cotation', 'Cote de niveau', 'Cote de rayon', 'Cotation angulaire', 'Texte', 'Étiquette', 'Élément de grille', 'Changement',
  'Hachure', 'Ligne', 'Cercle/Arc', 'Polyligne', 'Spline', 'Point chaud', 'Figure', 'Dessin',
];

function Tool({ name }: { name: string }) {
  const active = name === 'Maillage';
  return (
    <div className="relative h-7">
      <button className={`flex h-7 w-[178px] items-center rounded-r-md pl-[7px] ${active ? 'bg-[#b4b5bb]' : ''}`}>
        <svg viewBox="0 0 28 24" className="h-6 w-7 shrink-0 overflow-visible" fill="#faf8f8" stroke="#222b30" strokeWidth="1.100" aria-hidden>
          {toolIcons[name]}
        </svg>
        <span className="pl-[9px] whitespace-nowrap">{name}</span>
      </button>
      {active && (
        <>
          <span className="absolute -top-[3px] -right-[9px] -left-[3px] z-10 h-[35px] border-[5px] border-[#fb2c1c]" />
          <Callout n={2} className="-top-4 left-[204px]" />
        </>
      )}
    </div>
  );
}

function Section({ title, open = true }: { title: string; open?: boolean }) {
  return (
    <button className={`mt-px flex h-5 w-[179px] shrink-0 items-center rounded-r bg-[#cfcfcf] pl-1 text-[#2a2a2a] ${open ? 'mb-px' : ''}`}>
      <svg viewBox="0 0 10 10" className="mr-[7px] size-[9px]" fill="#878787">
        {open ? <path d="M0 1h10L5 9z" /> : <path d="M1 0l8 5-8 5z" />}
      </svg>
      {title}
    </button>
  );
}

function Toolbox() {
  return (
    <aside className="flex w-[180px] shrink-0 flex-col border-r border-[#dcdcdc] bg-[#f2e9e8] text-[11px] text-[#101010]">
      <div className="flex h-[7px] items-center justify-center bg-[#e9e9e9]">
        <span className="h-px w-[69px] bg-[#9c9c9c]" />
      </div>
      {selectTools.map((t) => <Tool key={t} name={t} />)}
      <Section title="Dessin" />
      {designTools.map((t) => <Tool key={t} name={t} />)}
      <Section title="Pt. vue" open={false} />
      <Section title="Docu." />
      {docTools.map((t) => <Tool key={t} name={t} />)}
    </aside>
  );
}

const tabs = [
  { label: '', icon: 'doc' },
  { label: '', icon: 'doc' },
  { label: '[D-02 Detail]', icon: 'detail' },
  { label: '[test]', icon: 'schedule' },
  { label: '(!) Perspective générique [3D / Tous]', icon: 'persp' },
  { label: '[02-01 Rez-de-chaussée]', icon: 'sheet' },
  { label: '[Type A0 Paysage]', icon: 'sheetDark' },
];

function TabBar() {
  return (
    <div className="flex h-[22px] shrink-0 bg-[#e2e2e2] text-[11px] text-[#3c3c3c]">
      <button aria-label="Aperçu des onglets" className="flex w-[33px] items-center justify-center text-[#333c42]">
        <Icon name="quad" className="size-[22px]" />
      </button>
      {tabs.map((t, i) => (
        <button
          key={i}
          aria-label={t.label || 'Onglet'}
          className={`flex min-w-0 flex-1 items-center gap-1 border-r border-[#a9a9a9] ${i === 0 ? 'bg-white' : 'justify-center'}`}
        >
          <Icon name={t.icon} className={i === 0 ? 'ml-[58px] size-[18px]' : 'size-[18px]'} />
          {t.label}
        </button>
      ))}
      <button aria-label="Vues" className="flex w-[53px] items-center justify-center gap-1 bg-[#f4f4f4]">
        <Icon name="views" className="size-5" />
        <ChevronDown className="size-3" strokeWidth={3} />
      </button>
    </div>
  );
}

const columns = Array.from({ length: 66 }, (_, i) => i - 12);
const rows = Array.from({ length: 39 }, (_, i) => 36 - i);

function Drawing() {
  return (
    <svg viewBox="193 222 1873 1111" className="w-full flex-1" fill="none" aria-label="Plan">
      <rect x="889" y="547" width="750" height="610" fill="#e1fce0" stroke="#3fa33f" strokeWidth="1.500" />
      {[[889, 547], [1639, 547], [889, 1157], [1639, 1157]].map(([x, y]) => (
        <circle key={`${x}-${y}`} cx={x} cy={y} r="3.200" fill="black" />
      ))}
      <path
        d="M860 776C905 748 955 722 1009 719C1098 711 1187 752 1276 791C1378 832 1515 850 1609 815C1660 798 1702 770 1744 741"
        stroke="#6f7a6f"
      />
      <path d="M857 776h6M860 773v6M1006 719h6M1009 716v6M1273 791h6M1276 788v6M1606 815h6M1609 812v6M1741 741h6M1744 738v6" stroke="#555" />

      {/* repères d'élévation */}
      <g stroke="#4da3f5" strokeWidth="1.300" fill="white">
        <path d="M1220 357h57l-28 28z" />
        <circle cx="1249" cy="357" r="20" />
        <path d="M496 806v57l28-29z" />
        <circle cx="496" cy="834" r="20" />
        <path d="M2001 806v57l-28-29z" />
        <circle cx="2001" cy="834" r="20" />
        <path d="M1220 1312h57l-28-29z" />
        <circle cx="1249" cy="1312" r="20" />
      </g>
      <g stroke="#66aaf5" strokeWidth="1.300">
        <path d="M1959 357h42v42M1959 1311h42v-42M495 1269v42h43" />
        <path d="M1273 456h-28v29M1245 1183v28h29M598 806v28h29" />
      </g>
      <g fill="#4b4bf0" className="font-['Liberation_Sans',sans-serif] text-[16px]" stroke="#4b4bf0" strokeWidth="0.300" textAnchor="middle">
        <text x="1249" y="363">N</text>
        <text x="495" y="840">O</text>
        <text x="2001" y="840">E</text>
        <text x="1249" y="1318">S</text>
        <g className="text-[20px]">
          <text x="584" y="830">A</text>
          <text transform="translate(1264 441) rotate(-90)">B</text>
          <text transform="translate(1264 1228) rotate(-90)">B</text>
        </g>
      </g>
      <path d="M548 1250l7 7M555 1250l-7 7" stroke="#222" strokeWidth="1.600" />

      {/* poignées des palettes ancrées */}
      <g fill="#efefef">
        <rect x="1114" y="223" width="32" height="16" rx="2" />
        <rect x="1114" y="1316" width="32" height="16" rx="2" />
        <rect x="194" y="761" width="16" height="32" rx="2" />
        <rect x="2050" y="761" width="16" height="32" rx="2" />
      </g>
      <path d="M1117 1323h28M202 764v27" stroke={ORANGE} strokeDasharray="5 2" />
      <path d="M1117 232h28M2058 764v27" stroke="#b5b5b5" strokeDasharray="5 2" />

      <g fill="#fb2c1c" stroke="#fb2c1c">
        <path d="M675 1107 868 967" strokeWidth="5" />
        <path d="M889 952 862 957l14 20z" />
        <rect x="641.500" y="1079.500" width="31" height="56" fill="white" strokeWidth="3" />
        <text x="657" y="1121" stroke="none" textAnchor="middle" className="font-['Liberation_Sans',sans-serif] text-4xl font-bold">2</text>
      </g>
    </svg>
  );
}

const status = [
  { icon: 'zoomFit', label: '65%' },
  { icon: 'orient', label: '0.000°' },
  { icon: 'scale', label: '1:100' },
  { icon: 'layers', label: '00 - Tous les calques' },
  { icon: 'model', label: 'Modèle entier' },
  { icon: 'pen', label: '00 - Par outils et mat...' },
  { icon: 'frame', label: '00 - Tout' },
  { icon: 'swap', label: 'Pas de substitutions' },
  { icon: 'reno', label: '00 - Afficher tout' },
  { icon: 'arches', label: 'Modèle principal uniq...' },
  { icon: 'dims', label: '01 - Centimètre' },
];

function StatusBar() {
  return (
    <div className="flex h-[18px] shrink-0 bg-[#e7e7e7] text-[11px] text-[#26292b]">
      <div className="flex w-[71px] items-center justify-between pr-[6px] pl-[2px]">
        <button aria-label="Zoom précédent"><Icon name="zoomBack" className="size-4" /></button>
        <button aria-label="Zoom suivant" className="opacity-40"><Icon name="zoomFwd" className="size-4" /></button>
        <button aria-label="Zoom avant"><Icon name="zoomIn" className="size-4" /></button>
      </div>
      {status.map((s) => (
        <button key={s.label} className="flex min-w-0 flex-1 items-center border-l border-[#cfcfcf] pl-[6px] whitespace-nowrap">
          <Icon name={s.icon} className="size-4" />
          <span className="flex-1 pl-1 text-center">{s.label}</span>
          <ChevronRight className="size-3 shrink-0" strokeWidth={3} />
        </button>
      ))}
    </div>
  );
}

export default function App() {
  return (
    <div className="flex min-h-screen flex-col overflow-hidden bg-[#14161c] font-['Inter','Liberation_Sans',sans-serif]">
      <MenuBar />
      <div className="flex h-[29px] shrink-0 items-center gap-2 rounded-tl-lg border-b border-[#bababa] bg-[#f8edec] pl-[6px]">
        <button aria-label="Fermer" className="size-3 rounded-full border border-[#e0443e] bg-[#ff5f57]" />
        <button aria-label="Réduire" className="size-3 rounded-full border border-[#dea123] bg-[#febc2e]" />
        <button aria-label="Agrandir" className="size-3 rounded-full border border-[#1aab29] bg-[#28c13c]" />
      </div>
      <Toolbars />
      <InfoBox />
      <div className="flex flex-1">
        <Toolbox />
        <main className="flex min-w-0 flex-1 flex-col bg-white">
          <TabBar />
          <div className="flex h-[13px] shrink-0 items-center border-b border-[#dedede] pr-[10px] pl-5 text-[10px] text-black">
            {columns.map((n) => (
              <div key={n} className="flex min-w-0 flex-1 items-center">
                <span className="h-[5px] w-[2px] bg-black" />
                <span className="flex-1 text-center">{n}</span>
              </div>
            ))}
            <span className="h-[5px] w-[2px] bg-black" />
          </div>
          <div className="flex min-h-0 flex-1">
            <div className="flex w-[13px] shrink-0 flex-col items-center border-r border-[#dedede] pt-[7px] pb-[7px] text-[10px] text-black">
              {rows.map((n) => (
                <div key={n} className="flex min-h-0 flex-1 flex-col items-center">
                  <span className="h-[2px] w-[5px] bg-black" />
                  <span className="flex flex-1 rotate-180 items-center justify-center leading-none [writing-mode:vertical-rl]">{n}</span>
                </div>
              ))}
              <span className="h-[2px] w-[5px] bg-black" />
            </div>
            <Drawing />
          </div>
          <StatusBar />
        </main>
      </div>
      <footer className="h-[25px] shrink-0 rounded-bl-lg border-t border-[#d6d6d6] bg-linear-to-b from-[#e2e2e2] to-[#cecece]" />
    </div>
  );
}
